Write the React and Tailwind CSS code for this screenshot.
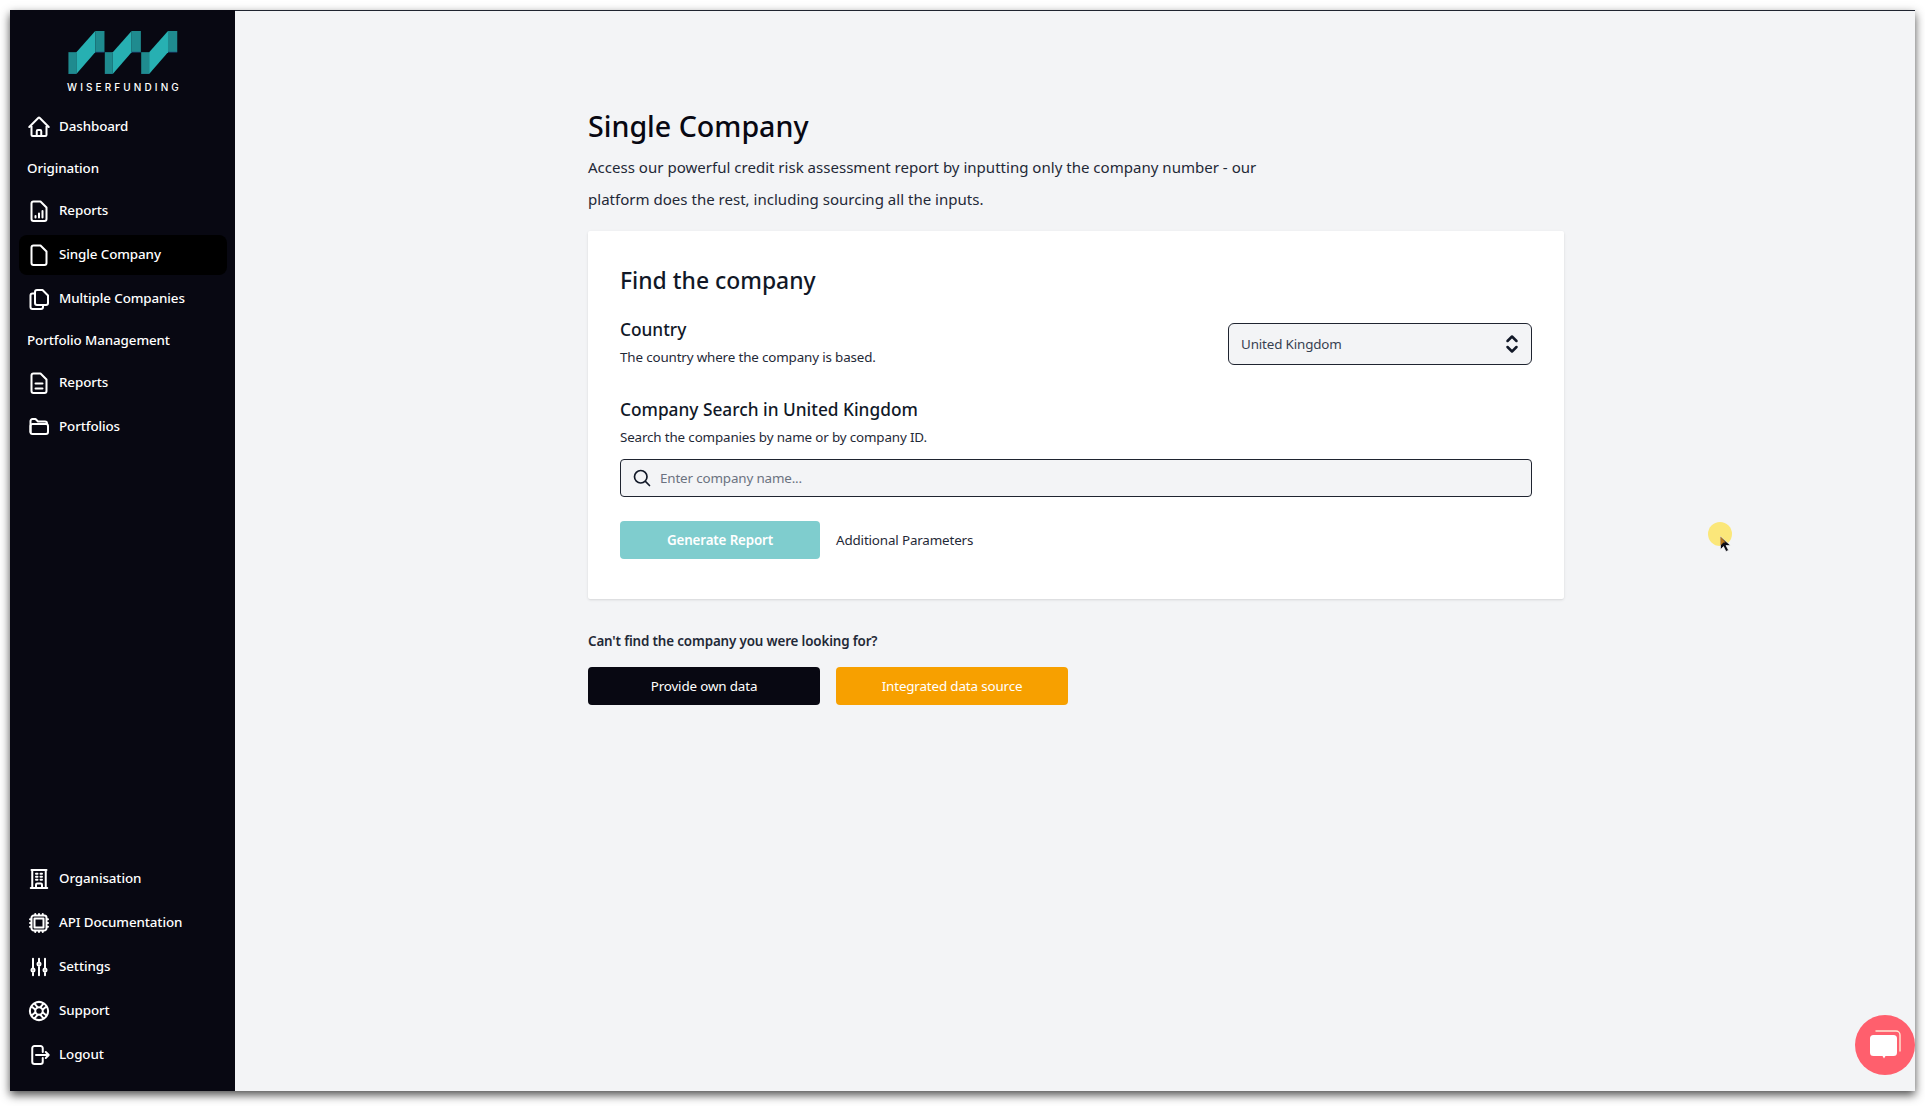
import React from 'react';
import {
    HiOutlineHome,
    HiOutlineBuildingOffice,
    HiOutlineCpuChip,
    HiOutlineAdjustmentsVertical,
    HiOutlineLifebuoy,
    HiOutlineArrowRightOnRectangle,
    HiOutlineMagnifyingGlass,
} from 'react-icons/hi2';

const docPath = "M6.500 2.500h7l6 6v11.500a2 2 0 0 1-2 2h-11a2 2 0 0 1-2-2v-15.500a2 2 0 0 1 2-2z";

const Stroke = ({ className, children }) => (
    <svg viewBox="0 0 24 24" fill="none" stroke="currentColor" strokeWidth="2" strokeLinecap="round" strokeLinejoin="round" className={className}>
        {children}
    </svg>
);

const ReportChartIcon = ({ className }) => (
    <Stroke className={className}>
        <path d={docPath} />
        <path d="M8.500 18.500v-1.500M12 18.500v-4M15.500 18.500v-6.500" />
    </Stroke>
);

const PlainDocIcon = ({ className }) => (
    <Stroke className={className}>
        <path d={docPath} />
    </Stroke>
);

const DuplicateIcon = ({ className }) => (
    <Stroke className={className}>
        <path d="M10 3h5.500l5.500 5.500v7.500a2 2 0 0 1-2 2h-9a2 2 0 0 1-2-2v-11a2 2 0 0 1 2-2z" />
        <path d="M8 6.500h-2.500a2 2 0 0 0-2 2v11.500a2 2 0 0 0 2 2h8.500a2 2 0 0 0 2-2v-2" />
    </Stroke>
);

const ReportLinesIcon = ({ className }) => (
    <Stroke className={className}>
        <path d={docPath} />
        <path d="M8.500 12.500h7M8.500 17.500h7" />
    </Stroke>
);

const FolderIcon = ({ className }) => (
    <Stroke className={className}>
        <path d="M3.500 17v-11a2 2 0 0 1 2-2h3l2.500 2.500h7a2 2 0 0 1 2 2" />
        <path d="M5.500 9h13.500a2 2 0 0 1 2 2v6a2 2 0 0 1-2 2h-13.500a2 2 0 0 1-2-2v-6a2 2 0 0 1 2-2z" />
    </Stroke>
);

const Logo = () => (
    <svg viewBox="54 33 330 130" className="w-[110px] h-[43px]">
        {[0, 110, 220].map((dx) => (
            <g key={dx} transform={`translate(${dx} 0)`}>
                <rect x="54" y="97" width="24" height="66" fill="#1f8b8f" />
                <polygon points="78,97 135,33 135,97 78,163" fill="#27b0b2" />
                <rect x="135" y="33" width="28" height="64" fill="#1f8b8f" />
                <line x1="135" y1="97" x2="163" y2="97" stroke="#1d3f78" strokeWidth="2" />
                <line x1="78" y1="163" x2="54" y2="163" stroke="#1d3f78" strokeWidth="1" />
            </g>
        ))}
    </svg>
);

const NavItem = ({ icon: Icon, label, active }) => (
    <div className={`flex items-center h-10 px-2 rounded-lg text-white ${active ? 'bg-black' : ''}`}>
        <Icon className="w-6 h-6 mr-2 shrink-0 stroke-2" />
        <span className="text-[13.4px] tracking-[-0.1px] font-medium pb-[1px]">{label}</span>
    </div>
);

const NavLabel = ({ children }) => (
    <div className="h-5 my-3 px-2 flex items-center text-white text-[13.4px] tracking-[-0.1px] font-medium pb-[1px]">{children}</div>
);

const Sidebar = () => (
    <aside className="w-[225px] shrink-0 bg-[#080812] pl-[9px] pr-2 pb-4 flex flex-col">
        <div className="h-[97px] flex flex-col items-center pt-[21px]">
            <Logo />
            <span className="mt-[6px] ml-[3px] text-[10px] leading-[14px] font-medium tracking-[0.31em] text-white font-['Inter',sans-serif]">WISERFUNDING</span>
        </div>
        <NavItem icon={HiOutlineHome} label="Dashboard" />
        <NavLabel>Origination</NavLabel>
        <div className="flex flex-col gap-1">
            <NavItem icon={ReportChartIcon} label="Reports" />
            <NavItem icon={PlainDocIcon} label="Single Company" active />
            <NavItem icon={DuplicateIcon} label="Multiple Companies" />
        </div>
        <NavLabel>Portfolio Management</NavLabel>
        <div className="flex flex-col gap-1">
            <NavItem icon={ReportLinesIcon} label="Reports" />
            <NavItem icon={FolderIcon} label="Portfolios" />
        </div>
        <div className="mt-auto flex flex-col gap-1">
            <NavItem icon={HiOutlineBuildingOffice} label="Organisation" />
            <NavItem icon={HiOutlineCpuChip} label="API Documentation" />
            <NavItem icon={HiOutlineAdjustmentsVertical} label="Settings" />
            <NavItem icon={HiOutlineLifebuoy} label="Support" />
            <NavItem icon={HiOutlineArrowRightOnRectangle} label="Logout" />
        </div>
    </aside>
);

const Content = () => (
    <main className="flex-1 bg-[#f3f4f6] pt-[97px] pl-[2px] flex flex-col items-center text-[#111827] shadow-[inset_0_1px_0_#1f2430]">
        <div className="w-[976px]">
            <h1 className="text-[28.6px] leading-[38px] pb-[2px] font-medium text-[#080812] mb-1">Single Company</h1>
            <p className="text-[15.06px] leading-8 w-[680px] text-[#1f2937] mb-4">
                Access our powerful credit risk assessment report by inputting only the company number - our platform does the rest, including sourcing all the inputs.
            </p>
            <section className="bg-white rounded-[2px] shadow-sm p-8 pb-10">
                <h2 className="text-[22.9px] leading-9 font-medium">Find the company</h2>
                <div className="flex justify-between items-start mt-4">
                    <div>
                        <h3 className="text-[17.3px] leading-[26px] pt-[2px] font-medium">Country</h3>
                        <p className="text-[13.4px] tracking-[-0.15px] leading-5 mt-1 text-[#1f2937]">The country where the company is based.</p>
                    </div>
                    <div className="mt-2 w-[304px] h-[42px] bg-[#f3f4f6] border border-[#1f2430] rounded-md flex items-center justify-between pl-3 pr-[7px]">
                        <span className="text-[13.4px] tracking-[-0.15px] text-[#374151]">United Kingdom</span>
                        <Stroke className="w-6 h-6 text-[#111827] stroke-[2.5]">
                            <path d="M7.500 9l4.500-4.500 4.500 4.500M7.500 15l4.500 4.500 4.500-4.500" />
                        </Stroke>
                    </div>
                </div>
                <h3 className="text-[17.3px] leading-7 font-medium mt-[29px]">Company Search in United Kingdom</h3>
                <p className="text-[13.4px] tracking-[-0.15px] leading-5 mt-[3px] text-[#1f2937]">Search the companies by name or by company ID.</p>
                <div className="mt-3 h-[38px] bg-[#f3f4f6] border border-[#1f2430] rounded-[4px] flex items-center pl-[11px]">
                    <HiOutlineMagnifyingGlass className="w-5 h-5 text-[#111827] shrink-0 stroke-2" />
                    <input
                        placeholder="Enter company name..."
                        className="ml-2 flex-1 bg-transparent outline-none text-[13.4px] tracking-[-0.15px] placeholder:text-[#6b7280]"
                    />
                </div>
                <div className="mt-6 flex items-center gap-4">
                    <button className="w-[200px] h-[38px] rounded-[4px] bg-[#7fcdce] text-white text-[13.4px] tracking-[-0.15px] font-semibold">Generate Report</button>
                    <span className="text-[13.4px] tracking-[-0.15px] text-[#1f2937]">Additional Parameters</span>
                </div>
            </section>
            <p className="mt-8 text-[13.4px] tracking-[-0.15px] leading-5 font-semibold text-[#1f2937]">Can't find the company you were looking for?</p>
            <div className="mt-4 flex gap-4">
                <button className="w-[232px] h-[38px] rounded-[4px] bg-[#080812] text-white text-[13.4px] tracking-[-0.15px]">Provide own data</button>
                <button className="w-[232px] h-[38px] rounded-[4px] bg-[#f7a000] text-white text-[13.4px] tracking-[-0.15px]">Integrated data source</button>
            </div>
        </div>
    </main>
);

const ChatButton = () => (
    <div className="absolute right-0 bottom-4 w-[60px] h-[60px] rounded-full bg-[#ff5f6d] flex items-center justify-center">
        <svg viewBox="0 0 32 32" className="w-8 h-8">
            <path d="M7 2h20a4 4 0 0 1 4 4v16" fill="none" stroke="#ffe9d6" strokeWidth="1.400" strokeLinecap="round" />
            <path d="M4.500 6h20a3.500 3.500 0 0 1 3.500 3.500v14a3.500 3.500 0 0 1-3.500 3.500h-8l-1.500 2.500-1.500-2.500h-9a3.500 3.500 0 0 1-3.500-3.500v-14a3.500 3.500 0 0 1 3.500-3.500z" fill="#fff" />
        </svg>
    </div>
);

const CursorMark = () => (
    <div className="absolute left-[1698px] top-[512px] pointer-events-none">
        <div className="w-6 h-6 rounded-full bg-[#fbe77a]" />
        <svg viewBox="0 0 12 16" className="absolute left-[12px] top-[14px] w-3 h-4">
            <path d="M0.500 0.500v13l3-3 2.500 5 2.500-1.200-2.500-4.800h4.500z" fill="#0b0b14" stroke="#fff" strokeWidth="0.600" />
            <path d="M0.500 0.500v9l3-3h2z" fill="#b8761a" />
        </svg>
    </div>
);

const App = () => (
    <div className="w-[1925px] h-[1106px] bg-white pl-[10px] pr-[10px] pt-[10px] pb-[15px] overflow-hidden font-['Noto_Sans',sans-serif]">
        <div className="relative w-full h-full flex shadow-[0_4px_9px_rgba(0,0,0,0.7)]">
            <Sidebar />
            <Content />
            <ChatButton />
            <CursorMark />
        </div>
    </div>
);

export default App;
